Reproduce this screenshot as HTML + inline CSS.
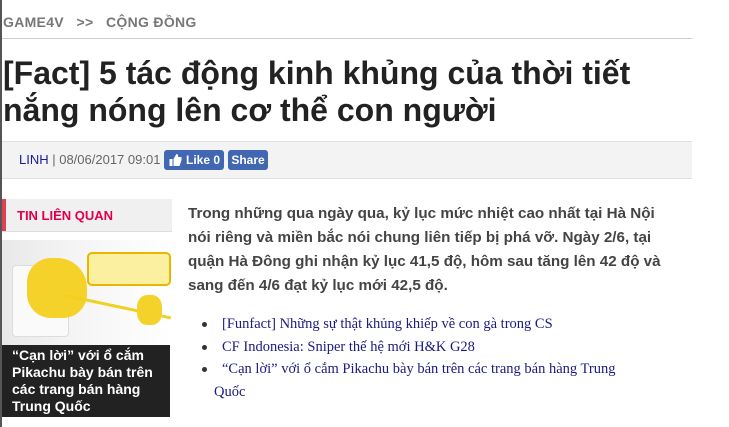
<!DOCTYPE html>
<html><head><meta charset="utf-8"><style>
body{margin:0;width:729px;height:427px;overflow:hidden;background:#fff;font-family:"Liberation Sans",sans-serif;position:relative}
.lb{position:absolute;left:0;top:0;width:2px;height:427px;background:#555}
.bc{position:absolute;left:3px;top:14px;font-size:14px;font-weight:bold;color:#777;white-space:pre;letter-spacing:0.3px}
.hr{position:absolute;left:2px;top:38px;width:690px;height:1px;background:#ccc}
h1{position:absolute;left:3px;top:55px;margin:0;font-size:32px;line-height:37px;font-weight:bold;color:#222;white-space:nowrap}
.meta{position:absolute;left:2px;top:141px;width:690px;height:36px;background:#f3f3f3;border-top:1px solid #e0e0e0;border-bottom:1px solid #e0e0e0}
.meta .t{position:absolute;left:17px;top:10px;font-size:13px;color:#666}
.meta .t b{font-weight:normal;color:#1a1aa0}
.fb{position:absolute;top:8px;height:20px;background:#4267b2;color:#fff;font-size:12px;font-weight:bold;border-radius:3px;line-height:20px}
.sb{position:absolute;left:2px;top:199px;width:170px;height:32px;background:#f0f0f0;border-bottom:1px solid #ddd}
.sb:before{content:"";position:absolute;left:0;top:0;width:4px;height:32px;background:#e04050}
.sb span{position:absolute;left:15px;top:9px;font-size:13px;font-weight:bold;color:#e0004a}
.img{position:absolute;left:2px;top:240px;width:170px;height:105px;background:linear-gradient(90deg,#e8e8e8 0,#f4f4f4 40%,#fff 100%)}
.cap{position:absolute;left:2px;top:345px;width:168px;height:72px;background:#222;color:#fff;font-size:14px;font-weight:bold;line-height:17px;padding:2px 0 0 10px;box-sizing:border-box;white-space:nowrap}
.body{position:absolute;left:188px;top:202px;font-size:15.2px;font-weight:bold;color:#444;line-height:24px;white-space:nowrap}
ul{position:absolute;left:188px;top:313px;margin:0;padding:0;list-style:none;font-family:"Liberation Serif",serif;font-size:14.5px;color:#1a1a80;line-height:22.5px}
li{position:relative;padding-left:34px}
li:before{content:"";position:absolute;left:14px;top:9px;width:5px;height:5px;border-radius:50%;background:#333}
</style></head><body>
<div class="lb"></div>
<div class="bc">GAME4V   &gt;&gt;   CỘNG ĐỒNG</div>
<div class="hr"></div>
<h1>[Fact] 5 tác động kinh khủng của thời tiết<br>nắng nóng lên cơ thể con người</h1>
<div class="meta"><div class="t"><b>LINH</b> | 08/06/2017 09:01</div>
<div class="fb" style="left:162px;width:60px"><span style="padding-left:22px">Like 0</span><svg style="position:absolute;left:5px;top:4px" width="13" height="12" viewBox="0 0 12 12"><path d="M0 5h3v7H0zM4 5l3-5c1 0 2 1 1.5 3H12v3l-2 6H4z" fill="#fff"/></svg></div>
<div class="fb" style="left:226px;width:40px;text-align:center">Share</div></div>
<div class="sb"><span>TIN LIÊN QUAN</span></div>
<div class="img">
<div style="position:absolute;left:10px;top:25px;width:55px;height:70px;background:#fafafa;border:1px solid #ddd;border-radius:4px"></div>
<div style="position:absolute;left:25px;top:18px;width:60px;height:60px;background:#f5d22a;border-radius:40% 50% 40% 40%"></div>
<div style="position:absolute;left:60px;top:65px;width:110px;height:3px;background:#f0d020;transform:rotate(12deg)"></div>
<div style="position:absolute;left:85px;top:12px;width:80px;height:30px;background:#fbf0a0;border:2px solid #e8b800;border-radius:5px"></div>
<div style="position:absolute;left:135px;top:55px;width:25px;height:30px;background:#f5d22a;border-radius:40%"></div>
</div>
<div class="cap">“Cạn lời” với ổ cắm<br>Pikachu bày bán trên<br>các trang bán hàng<br>Trung Quốc</div>
<div class="body">Trong những qua ngày qua, kỷ lục mức nhiệt cao nhất tại Hà Nội<br>nói riêng và miền bắc nói chung liên tiếp bị phá vỡ. Ngày 2/6, tại<br>quận Hà Đông ghi nhận kỷ lục 41,5 độ, hôm sau tăng lên 42 độ và<br>sang đến 4/6 đạt kỷ lục mới 42,5 độ.</div>
<ul>
<li>[Funfact] Những sự thật khủng khiếp về con gà trong CS</li>
<li>CF Indonesia: Sniper thế hệ mới H&amp;K G28</li>
<li>“Cạn lời” với ổ cắm Pikachu bày bán trên các trang bán hàng Trung<br><span style="margin-left:-8px">Quốc</span></li>
</ul>
</body></html>
